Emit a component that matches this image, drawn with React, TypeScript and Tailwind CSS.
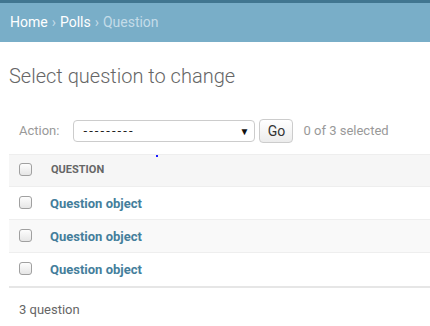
import React from "react";

function Checkbox() {
  return (
    <span className="inline-block w-[13px] h-[13px] rounded-[3px] border border-[#a0a0a0] bg-gradient-to-b from-[#fdfdfd] to-[#e6e6e6]" />
  );
}

export default function App() {
  const rows = [0, 1, 2];
  return (
    <div className="w-[430px] h-[326px] bg-white overflow-hidden text-[13px]" style={{ fontFamily: "Roboto, 'Liberation Sans', sans-serif" }}>
      <div className="h-[3px] bg-[#417690]" />
      <div className="h-[39px] bg-[#79aec8] flex items-center px-[10px] text-[14px] text-white">
        <span>Home</span>
        <span className="mx-[4px] text-[#c4dce8]">›</span>
        <span>Polls</span>
        <span className="mx-[4px] text-[#c4dce8]">›</span>
        <span className="text-[#c4dce8]">Question</span>
      </div>
      <div className="pl-[9px]">
        <h1 className="mt-[21px] text-[20px] font-light text-[#666] leading-[26px]">Select question to change</h1>
        <div className="mt-[26px] h-[39px] flex items-start pt-[5px] pl-[10px]">
          <span className="text-[#999] text-[13px] mr-[14px] leading-[22px]">Action:</span>
          <div className="w-[182px] h-[22px] border border-[#ccc] rounded-[4px] flex items-center justify-between pl-[9px] pr-[5px] text-[#222]">
            <span className="text-[13px] tracking-[2.1px]">---------</span>
            <span className="text-[10px] text-[#111]">▼</span>
          </div>
          <div className="ml-[4px] -mt-[1px] h-[24px] w-[34px] border border-[#ccc] rounded-[4px] bg-gradient-to-b from-[#fff] to-[#ececec] flex items-center justify-center text-[#333] text-[14px]">Go</div>
          <span className="ml-[10px] text-[#999] text-[13px] leading-[22px]">0 of 3 selected</span>
        </div>
        <div className="relative">
          <div className="h-[33px] bg-[#f6f6f6] border-t border-b border-[#eee] flex items-center">
            <div className="w-[42px] pl-[10px] flex items-center -mt-[2px]"><Checkbox /></div>
            <span className="text-[11px] font-bold text-[#666] uppercase">Question</span>
          </div>
          <span className="absolute left-[147px] top-[1px] w-[2px] h-[2px] bg-[#1a1aff]" />
          {rows.map((i) => (
            <div key={i} className={`flex items-center ${i === 2 ? "h-[35px] border-b-[2px] border-[#e6e6e6]" : "h-[33px] border-b border-[#eee]"} ${i === 1 ? "bg-[#f9f9f9]" : "bg-white"}`}>
              <div className="w-[41px] pl-[10px] flex items-center -mt-[2px]"><Checkbox /></div>
              <span className="font-bold text-[#447e9b] text-[13px] pt-[1px]">Question object</span>
            </div>
          ))}
        </div>
        <div className="mt-[12px] pl-[10px] text-[#666] text-[13px]">3 question</div>
      </div>
    </div>
  );
}
